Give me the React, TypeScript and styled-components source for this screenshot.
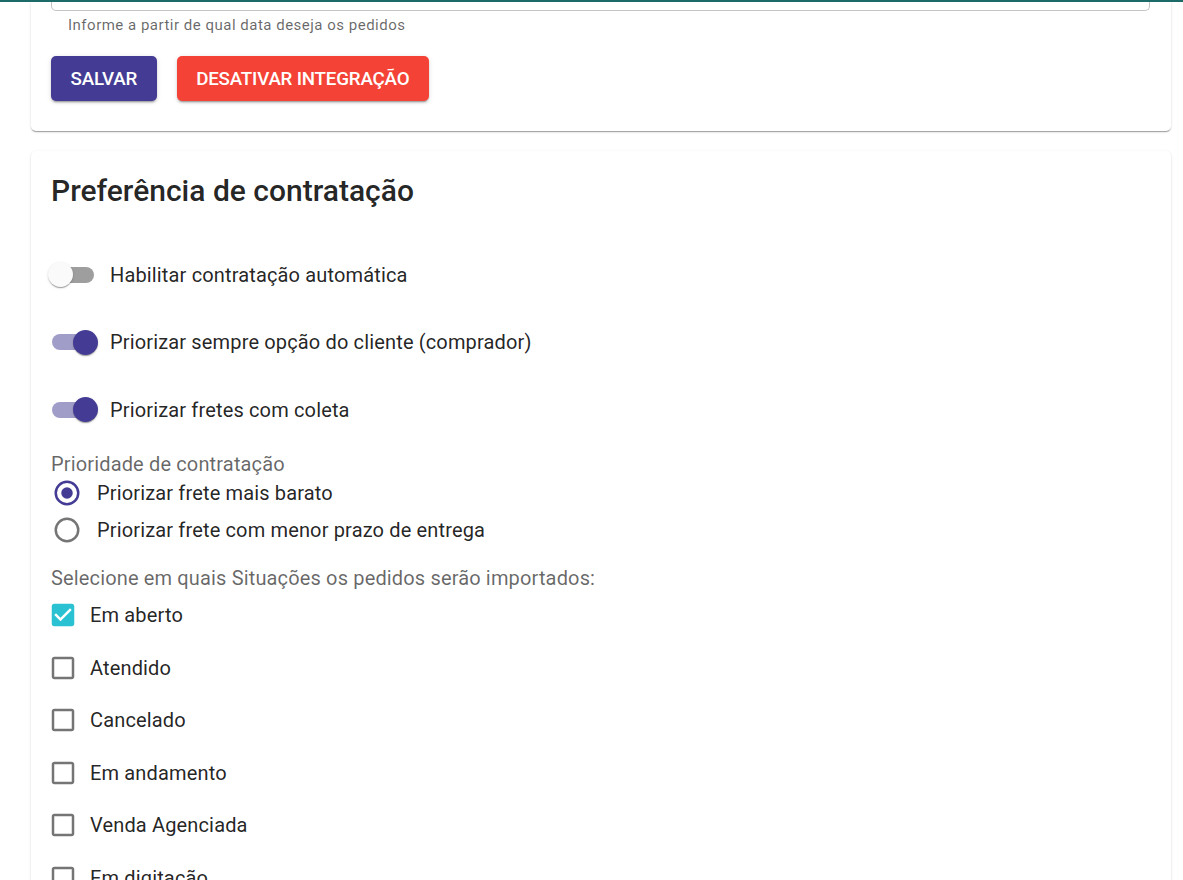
import React from "react";
import styled, { createGlobalStyle } from "styled-components";

const GlobalStyle = createGlobalStyle`
  body {
    margin: 0;
    background: #ffffff;
    font-family: Roboto, "Liberation Sans", Arial, sans-serif;
    color: rgba(0, 0, 0, 0.87);
  }
`;

const PURPLE = "#443c94";
const TEAL = "#2ac1d2";

const TopLine = styled.div`
  position: relative;
  z-index: 1;
  height: 2px;
  background: #1d6b69;
`;

const Page = styled.main`
  display: flex;
  flex-direction: column;
  gap: 20px;
  padding: 0 12px 40px 31px;
`;

const Card = styled.section<{ $cut?: boolean }>`
  background: #fff;
  border-radius: ${(p) => (p.$cut ? "0 0 5px 5px" : "5px")};
  box-shadow: 0px 2px 1px -1px rgba(0, 0, 0, 0.2), 0px 1px 1px 0px rgba(0, 0, 0, 0.14),
    0px 1px 3px 0px rgba(0, 0, 0, 0.12);
  padding: ${(p) => (p.$cut ? "0 20px 30px" : "20px 20px 30px")};
  display: flex;
  flex-direction: column;
`;

const InputTail = styled.div`
  height: 8px;
  border: 1px solid #c4c4c4;
  border-top: none;
  border-radius: 0 0 5px 5px;
  margin-right: 1px;
`;

const Helper = styled.p`
  margin: 4px 0 0 17px;
  font-size: 15px;
  line-height: 20px;
  letter-spacing: 0.5px;
  color: rgba(0, 0, 0, 0.6);
`;

const Actions = styled.div`
  display: flex;
  gap: 20px;
  margin-top: 21px;
`;

const Button = styled.button<{ $color: string }>`
  height: 45px;
  padding: 0 19.5px;
  border: none;
  border-radius: 5px;
  background: ${(p) => p.$color};
  color: #fff;
  font-family: Roboto, "Liberation Sans", Arial, sans-serif;
  font-size: 18.75px;
  font-weight: 500;
  letter-spacing: -0.2px;
  text-transform: uppercase;
  box-shadow: 0px 3px 1px -2px rgba(0, 0, 0, 0.2), 0px 2px 2px 0px rgba(0, 0, 0, 0.14),
    0px 1px 5px 0px rgba(0, 0, 0, 0.12);
  cursor: pointer;
`;

const Title = styled.h2`
  margin: 0;
  font-size: 30px;
  line-height: 40px;
  font-weight: 500;
  color: rgba(0, 0, 0, 0.87);
`;

const SwitchList = styled.div`
  display: flex;
  flex-direction: column;
  gap: 19.5px;
  margin-top: 39.5px;
`;

const SwitchRow = styled.label`
  display: flex;
  align-items: center;
  gap: 11px;
  height: 48px;
  margin-left: -4px;
  font-size: 20px;
  letter-spacing: 0.15px;
`;

const SwitchBox = styled.span`
  position: relative;
  width: 52px;
  height: 26px;
  flex: none;
`;

const Track = styled.span<{ $on: boolean }>`
  position: absolute;
  left: 5px;
  top: 5px;
  width: 42px;
  height: 16px;
  border-radius: 9px;
  background: ${(p) => (p.$on ? PURPLE : "#000")};
  opacity: ${(p) => (p.$on ? 0.5 : 0.38)};
`;

const Knob = styled.span<{ $on: boolean }>`
  position: absolute;
  top: 0.5px;
  left: ${(p) => (p.$on ? "26px" : "1px")};
  width: 25px;
  height: 25px;
  border-radius: 50%;
  background: ${(p) => (p.$on ? PURPLE : "#fafafa")};
  box-shadow: 0px 2px 1px -1px rgba(0, 0, 0, 0.2), 0px 1px 1px 0px rgba(0, 0, 0, 0.14),
    0px 1px 3px 0px rgba(0, 0, 0, 0.12);
`;

const GroupLabel = styled.div<{ $top: number }>`
  margin-top: ${(p) => p.$top}px;
  font-size: 20px;
  line-height: 22px;
  letter-spacing: 0.15px;
  color: rgba(0, 0, 0, 0.6);
`;

const OptionRow = styled.label<{ $h: number; $gap: number; $shift: number }>`
  display: flex;
  align-items: center;
  height: ${(p) => p.$h}px;
  gap: ${(p) => p.$gap}px;
  margin-left: ${(p) => p.$shift}px;
  font-size: 20px;
  letter-spacing: 0.15px;
  color: rgba(0, 0, 0, 0.87);
  svg {
    flex: none;
  }
`;

function Switch({ on, label }: { on: boolean; label: string }) {
  return (
    <SwitchRow>
      <SwitchBox>
        <Track $on={on} />
        <Knob $on={on} />
      </SwitchBox>
      {label}
    </SwitchRow>
  );
}

function Radio({ checked, label }: { checked: boolean; label: string }) {
  const c = checked ? PURPLE : "rgba(0,0,0,0.54)";
  return (
    <OptionRow $h={37} $gap={15} $shift={1}>
      <svg width="30" height="30" viewBox="0 0 24 24">
        <circle cx="12" cy="12" r="9" fill="none" stroke={c} strokeWidth="2" />
        {checked && <circle cx="12" cy="12" r="4.6" fill={c} />}
      </svg>
      {label}
    </OptionRow>
  );
}

function Checkbox({ checked, label }: { checked: boolean; label: string }) {
  return (
    <OptionRow $h={52.5} $gap={12} $shift={-3}>
      <svg width="30" height="30" viewBox="0 0 24 24">
        {checked ? (
          <path
            fill={TEAL}
            d="M19 3H5c-1.11 0-2 .9-2 2v14c0 1.1.89 2 2 2h14c1.11 0 2-.9 2-2V5c0-1.1-.89-2-2-2zm-9 14l-5-5 1.41-1.41L10 14.17l7.59-7.59L19 8l-9 9z"
          />
        ) : (
          <path
            fill="rgba(0,0,0,0.54)"
            d="M19 5v14H5V5h14m0-2H5c-1.1 0-2 .9-2 2v14c0 1.1.9 2 2 2h14c1.1 0 2-.9 2-2V5c0-1.11-.9-2-2-2z"
          />
        )}
      </svg>
      {label}
    </OptionRow>
  );
}

const situacoes = [
  { label: "Em aberto", checked: true },
  { label: "Atendido", checked: false },
  { label: "Cancelado", checked: false },
  { label: "Em andamento", checked: false },
  { label: "Venda Agenciada", checked: false },
  { label: "Em digitação", checked: false },
];

export default function App() {
  return (
    <>
      <GlobalStyle />
      <TopLine />
      <Page>
        <Card $cut>
          <InputTail />
          <Helper>Informe a partir de qual data deseja os pedidos</Helper>
          <Actions>
            <Button $color={PURPLE}>Salvar</Button>
            <Button $color="#f44336">Desativar integração</Button>
          </Actions>
        </Card>
        <Card>
          <Title>Preferência de contratação</Title>
          <SwitchList>
            <Switch on={false} label="Habilitar contratação automática" />
            <Switch on label="Priorizar sempre opção do cliente (comprador)" />
            <Switch on label="Priorizar fretes com coleta" />
          </SwitchList>
          <GroupLabel $top={19}>Prioridade de contratação</GroupLabel>
          <Radio checked label="Priorizar frete mais barato" />
          <Radio checked={false} label="Priorizar frete com menor prazo de entrega" />
          <GroupLabel $top={18.5}>Selecione em quais Situações os pedidos serão importados:</GroupLabel>
          {situacoes.map((s) => (
            <Checkbox key={s.label} checked={s.checked} label={s.label} />
          ))}
        </Card>
      </Page>
    </>
  );
}
